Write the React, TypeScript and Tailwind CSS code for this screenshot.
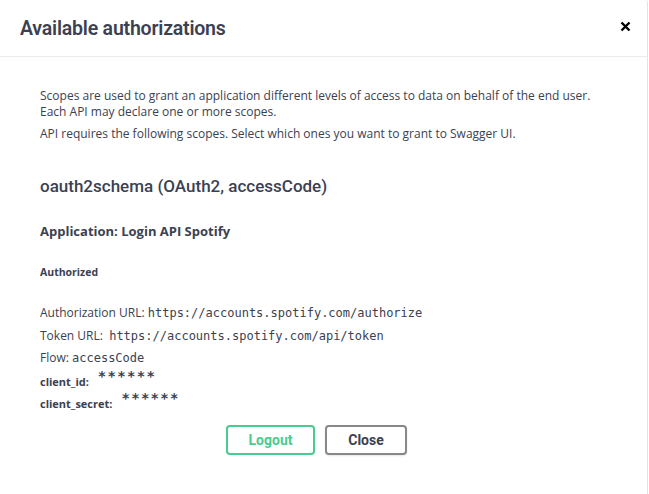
import React from "react";

const sans = { fontFamily: '"Open Sans", sans-serif' };

export default function App() {
  return (
    <div className="w-[649px] h-[494px] bg-white overflow-hidden">
      <div className="w-[648px] h-[494px] bg-white border-r border-[#e3e3e3] rounded-t-[3px] text-[#3b4151]">
        <div className="h-[57px] border-b border-[#ebebeb] flex items-center justify-between pl-5 pr-[16px]">
          <h3 className="font-['Roboto',sans-serif] font-semibold text-[19.5px] tracking-[-0.2px] text-[#3b4151] mt-[2px]">
            Available authorizations
          </h3>
          <svg width="11" height="11" viewBox="0 0 11 11" className="mt-[-4px]">
            <path d="M1.5 1.5 L9.5 9.5 M9.5 1.5 L1.5 9.5" stroke="#000" strokeWidth="2.4" />
          </svg>
        </div>
        <div className="px-10 font-['Open_Sans',sans-serif]">
          <div className="mt-[31px] text-[12px] leading-[16px]">
            Scopes are used to grant an application different levels of access to data on behalf of the end user.
            <br />
            Each API may declare one or more scopes.
          </div>
          <div className="mt-[6px] text-[12px] leading-[16px]">
            API requires the following scopes. Select which ones you want to grant to Swagger UI.
          </div>
          <h4 className="mt-[32px] font-['Roboto',sans-serif] font-medium text-[17px] leading-[24px]">
            oauth2schema (OAuth2, accessCode)
          </h4>
          <h6 className="mt-[24px] font-bold text-[13px] leading-[18px]" style={sans}>
            Application: Login API Spotify
          </h6>
          <h6 className="mt-[24px] font-bold text-[10.5px] leading-[16px]">Authorized</h6>
          <p className="mt-[22px] text-[12px] leading-[22px]">
            Authorization URL:{" "}
            <code className="font-['DejaVu_Sans_Mono',monospace] text-[12px]">https://accounts.spotify.com/authorize</code>
          </p>
          <p className="mt-[1px] text-[12px] leading-[22px]">
            Token URL:&nbsp;{" "}
            <code className="font-['DejaVu_Sans_Mono',monospace] text-[12px]">https://accounts.spotify.com/api/token</code>
          </p>
          <p className="text-[12px] leading-[21px]">
            Flow: <code className="font-['DejaVu_Sans_Mono',monospace] text-[12px]">accessCode</code>
          </p>
          <div className="h-[22px] flex items-end">
            <label className="font-bold text-[11px] leading-[18px]">client_id:</label>
            <code className="ml-[9px] mb-[6px] font-['DejaVu_Sans_Mono',monospace] text-[14px] font-bold leading-[18px] tracking-[1.3px]">******</code>
          </div>
          <div className="h-[22px] flex items-end">
            <label className="font-bold text-[11px] leading-[18px]">client_secret:</label>
            <code className="ml-[9px] mb-[6px] font-['DejaVu_Sans_Mono',monospace] text-[14px] font-bold leading-[18px] tracking-[1.3px]">******</code>
          </div>
          <div className="mt-[12px] flex gap-[10px] pl-[186px]">
            <button className="w-[89px] h-[30px] rounded-[4px] border-2 border-[#49cc90] text-[#49cc90] font-['Roboto',sans-serif] font-bold text-[14px]">
              Logout
            </button>
            <button className="w-[82px] h-[30px] rounded-[4px] border-2 border-[#888888] text-[#3b4151] font-['Roboto',sans-serif] font-bold text-[14px] shadow-[0_1px_2px_rgba(0,0,0,0.1)]">
              Close
            </button>
          </div>
        </div>
      </div>
    </div>
  );
}
